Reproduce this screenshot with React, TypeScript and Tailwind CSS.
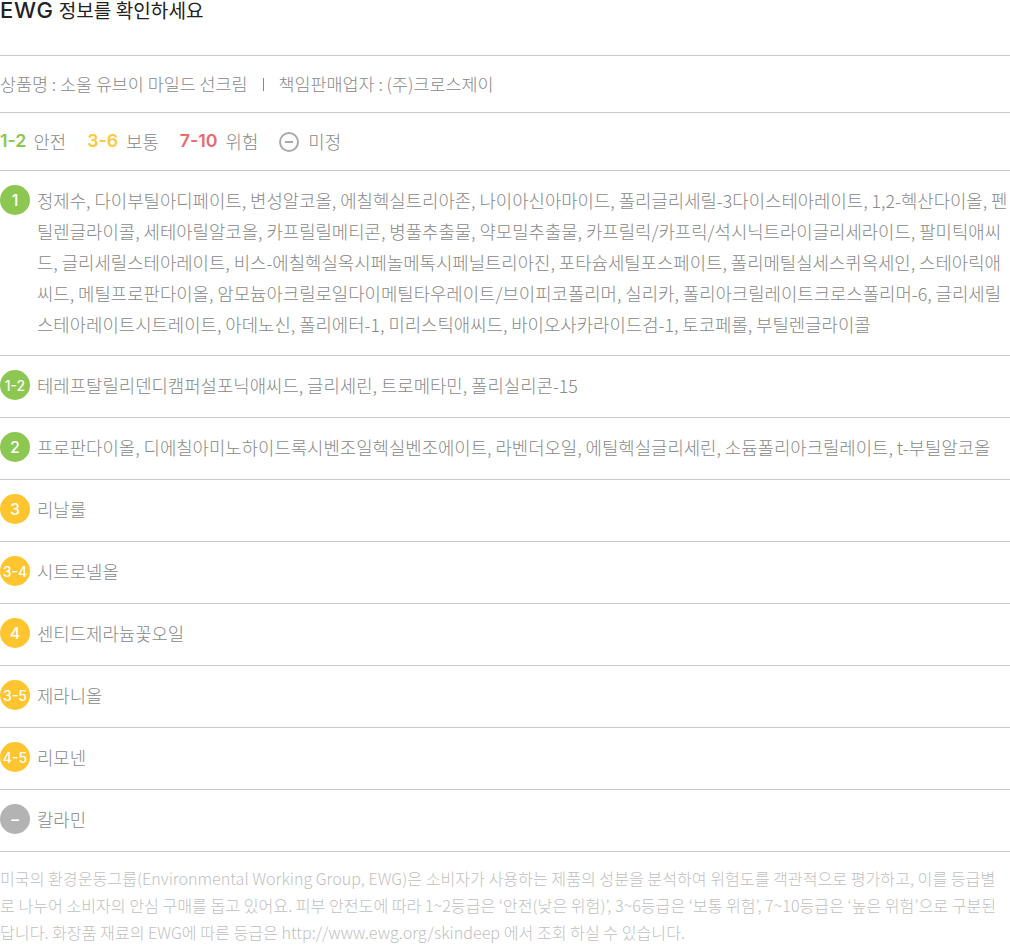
const kr = "font-['Noto_Sans_CJK_KR','Noto_Sans',sans-serif]";

const GREEN = 'bg-[#8bc751]';
const YELLOW = 'bg-[#fec52e]';
const GRAY = 'bg-[#b3b3b3]';

interface IRow {
  grade: string;
  color: string;
  lines: string[];
}

const rows: IRow[] = [
  {
    grade: '1',
    color: GREEN,
    lines: [
      '정제수, 다이부틸아디페이트, 변성알코올, 에칠헥실트리아존, 나이아신아마이드, 폴리글리세릴-3다이스테아레이트, 1,2-헥산다이올, 펜',
      '틸렌글라이콜, 세테아릴알코올, 카프릴릴메티콘, 병풀추출물, 약모밀추출물, 카프릴릭/카프릭/석시닉트라이글리세라이드, 팔미틱애씨',
      '드, 글리세릴스테아레이트, 비스-에칠헥실옥시페놀메톡시페닐트리아진, 포타슘세틸포스페이트, 폴리메틸실세스퀴옥세인, 스테아릭애',
      '씨드, 메틸프로판다이올, 암모늄아크릴로일다이메틸타우레이트/브이피코폴리머, 실리카, 폴리아크릴레이트크로스폴리머-6, 글리세릴',
      '스테아레이트시트레이트, 아데노신, 폴리에터-1, 미리스틱애씨드, 바이오사카라이드검-1, 토코페롤, 부틸렌글라이콜',
    ],
  },
  { grade: '1-2', color: GREEN, lines: ['테레프탈릴리덴디캠퍼설포닉애씨드, 글리세린, 트로메타민, 폴리실리콘-15'] },
  {
    grade: '2',
    color: GREEN,
    lines: ['프로판다이올, 디에칠아미노하이드록시벤조일헥실벤조에이트, 라벤더오일, 에틸헥실글리세린, 소듐폴리아크릴레이트, t-부틸알코올'],
  },
  { grade: '3', color: YELLOW, lines: ['리날룰'] },
  { grade: '3-4', color: YELLOW, lines: ['시트로넬올'] },
  { grade: '4', color: YELLOW, lines: ['센티드제라늄꽃오일'] },
  { grade: '3-5', color: YELLOW, lines: ['제라니올'] },
  { grade: '4-5', color: YELLOW, lines: ['리모넨'] },
  { grade: '−', color: GRAY, lines: ['칼라민'] },
];

const App = () => {
  return (
    <div className={`w-[1010px] h-[950px] overflow-hidden bg-white text-[#888] font-light ${kr}`}>
      <div className="h-[56px] border-b border-[#ccc] text-[19.1px] leading-[20px] font-normal text-[#222]">
        <span className="font-['Inter',sans-serif] font-medium text-[22px] tracking-[0.7px] mr-[5px]">EWG</span>정보를 확인하세요
      </div>

      <div className="h-[57px] flex items-center border-b border-[#ccc] text-[17.4px] whitespace-pre">
        <span>상품명 : 소울 유브이 마일드 선크림</span>
        <span className="w-[1px] h-[13px] bg-[#888] mx-[15px]" />
        <span>책임판매업자 : (주)크로스제이</span>
      </div>

      <div className="h-[58px] flex items-center border-b border-[#ccc] text-[17.8px]">
        <span className="font-['Inter',sans-serif] font-semibold text-[#8bc751] mr-[7px]">1-2</span>
        <span className="mr-[21px]">안전</span>
        <span className="font-['Inter',sans-serif] font-semibold text-[#fdc93f] mr-[8px]">3-6</span>
        <span className="mr-[21px]">보통</span>
        <span className="font-['Inter',sans-serif] font-semibold text-[#e96a6f] mr-[8px]">7-10</span>
        <span className="mr-[21px]">위험</span>
        <span className="w-[20px] h-[20px] rounded-full border-2 border-[#aaa] flex items-center justify-center mr-[9px]">
          <span className="w-[8px] h-[2px] bg-[#aaa]" />
        </span>
        <span>미정</span>
      </div>

      {rows.map((row) => (
        <div
          key={row.grade}
          className={`flex items-start border-b border-[#ccc] pt-[14px] ${row.lines.length > 1 ? 'pb-[15px]' : 'pb-[16px]'}`}
        >
          <span
            className={`w-[30px] h-[30px] shrink-0 rounded-full flex items-center justify-center text-white font-['Inter',sans-serif] font-medium ${
              row.grade.length > 1 ? 'text-[14px]' : 'text-[16px]'
            } ${row.color}`}
          >
            {row.grade}
          </span>
          <p className="ml-[7px] text-[17.8px] leading-[31px] whitespace-nowrap">
            {row.lines.map((line) => (
              <span key={line} className="block">
                {line}
              </span>
            ))}
          </p>
        </div>
      ))}

      <p className="mt-[13px] text-[16.13px] leading-[27px] text-[#bfbfbf] whitespace-nowrap">
        <span className="block">
          미국의 환경운동그룹(Environmental Working Group, EWG)은 소비자가 사용하는 제품의 성분을 분석하여 위험도를 객관적으로 평가하고, 이를 등급별
        </span>
        <span className="block">
          로 나누어 소비자의 안심 구매를 돕고 있어요. 피부 안전도에 따라 1~2등급은 ‘안전(낮은 위험)’, 3~6등급은 ‘보통 위험’, 7~10등급은 ‘높은 위험’으로 구분된
        </span>
        <span className="block">답니다. 화장품 재료의 EWG에 따른 등급은 http://www.ewg.org/skindeep 에서 조회 하실 수 있습니다.</span>
      </p>
    </div>
  );
};

export default App;
